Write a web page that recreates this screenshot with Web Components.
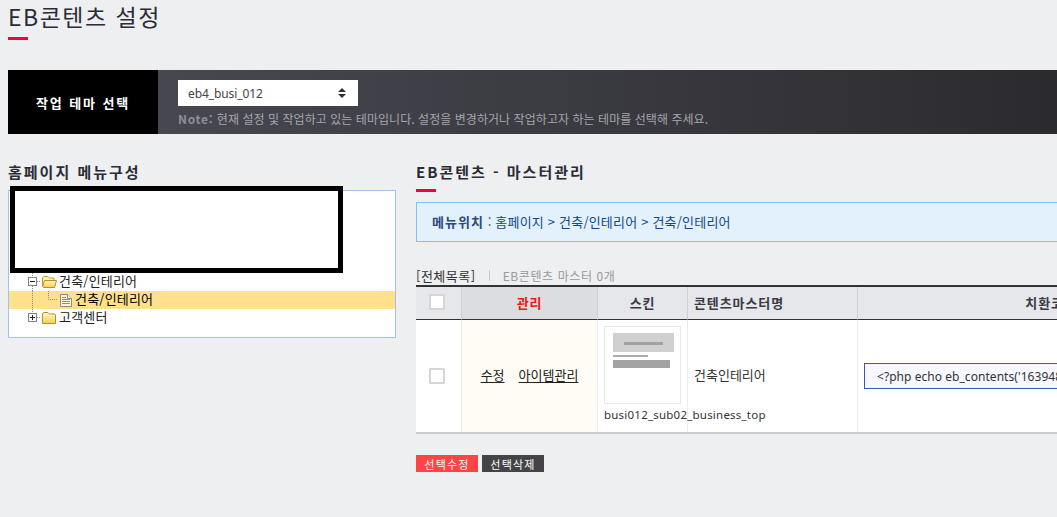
<!DOCTYPE html>
<html lang="ko">
<head>
<meta charset="utf-8">
<title>EB콘텐츠 설정</title>
<style>
    html, body { margin: 0; height: 100%; overflow: hidden; background: #eeeff1; }
    body { font-family: "Noto Sans CJK KR", "Noto Sans", sans-serif; font-size: 12px; color: #333; }
</style>
</head>
<body>
<eb-page>
    <eb-title slot="title">EB콘텐츠 설정</eb-title>
    <theme-bar slot="bar" label="작업 테마 선택" value="eb4_busi_012">
        <b>Note:</b> 현재 설정 및 작업하고 있는 테마입니다. 설정을 변경하거나 작업하고자 하는 테마를 선택해 주세요.
    </theme-bar>
    <menu-panel slot="left" heading="홈페이지 메뉴구성">
        <tree-row kind="open">건축/인테리어</tree-row>
        <tree-row kind="file" selected>건축/인테리어</tree-row>
        <tree-row kind="closed">고객센터</tree-row>
    </menu-panel>
    <master-panel slot="right" heading="EB콘텐츠 - 마스터관리"></master-panel>
</eb-page>

<script>
// page frame: title, theme bar, then two columns
class EbPage extends HTMLElement {
    constructor() {
        super();
        this.attachShadow({mode: 'open'}).innerHTML = `
            <style>
                :host { display: block; width: 1057px; height: 517px; overflow: hidden; }
                .bar { padding-left: 8px; }
                .title { padding-left: 8px; height: 70px; }
                .cols {
                    display: grid;
                    grid-template-columns: 388px 828px;
                    column-gap: 20px;
                    padding: 28px 0 0 8px;
                }
            </style>
            <div class="title"><slot name="title"></slot></div>
            <div class="bar"><slot name="bar"></slot></div>
            <div class="cols">
                <slot name="left"></slot>
                <slot name="right"></slot>
            </div>
        `;
    }
}

class EbTitle extends HTMLElement {
    constructor() {
        super();
        this.attachShadow({mode: 'open'}).innerHTML = `
            <style>
                :host { display: block; }
                h1 {
                    margin: 0;
                    height: 37px;
                    font: 400 23px/33px "Noto Sans CJK KR", sans-serif;
                    letter-spacing: 1.5px;
                    color: #2b2b36;
                }
                i { display: block; width: 20px; height: 3px; background: #f2003c; }
            </style>
            <h1><slot></slot></h1>
            <i></i>
        `;
    }
}

class ThemeBar extends HTMLElement {
    constructor() {
        super();
        const shadow = this.attachShadow({mode: 'open'});
        shadow.innerHTML = `
            <style>
                :host {
                    display: flex;
                    height: 64px;
                    background: linear-gradient(90deg, #4c4c56 0%, #2b2b2f 100%);
                }
                .label {
                    width: 150px;
                    background: #000;
                    color: #fff;
                    font-size: 13px;
                    font-weight: 700;
                    letter-spacing: 1.9px;
                    display: flex;
                    align-items: center;
                    justify-content: center;
                }
                .body { padding: 10px 0 0 20px; }
                .select {
                    width: 180px;
                    height: 26px;
                    box-sizing: border-box;
                    background: #fff;
                    padding: 0 12px 0 10px;
                    display: flex;
                    align-items: center;
                    justify-content: space-between;
                    font: 12px "Noto Sans", sans-serif;
                    color: #444;
                    letter-spacing: -0.1px;
                }
                svg { display: block; }
                .note {
                    margin-top: 5px;
                    font-size: 12px;
                    line-height: 16px;
                    color: #a5a5ab;
                    letter-spacing: 0.05px;
                    white-space: nowrap;
                }
                ::slotted(b) { color: #8d8d97; font-weight: 700; letter-spacing: 0.7px; }
            </style>
            <div class="label"></div>
            <div class="body">
                <div class="select">
                    <span class="val"></span>
                    <svg width="8" height="10" viewBox="0 0 8 10"><path d="M4 0 8 4H0ZM0 6H8L4 10Z" fill="#333"/></svg>
                </div>
                <div class="note"><slot></slot></div>
            </div>
        `;
        shadow.querySelector('.label').textContent = this.getAttribute('label');
        shadow.querySelector('.val').textContent = this.getAttribute('value');
    }
}

class SectionTitle extends HTMLElement {
    constructor() {
        super();
        this.attachShadow({mode: 'open'}).innerHTML = `
            <style>
                :host { display: block; }
                h2 {
                    margin: 0;
                    font: 700 15px/20px "Noto Sans CJK KR", sans-serif;
                    letter-spacing: 2px;
                    color: #2b2b36;
                }
            </style>
            <h2><slot></slot></h2>
        `;
    }
}

// left column
class MenuPanel extends HTMLElement {
    constructor() {
        super();
        const shadow = this.attachShadow({mode: 'open'});
        shadow.innerHTML = `
            <style>
                :host { display: block; position: relative; }
                .box {
                    margin-top: 8px;
                    height: 148px;
                    box-sizing: border-box;
                    border: 1px solid #a3c2ea;
                    background: #fff;
                    padding-top: 82px;
                }
                /* blacked out part of the screenshot */
                .redact {
                    position: absolute;
                    left: 2px;
                    top: 24px;
                    width: 333px;
                    height: 87px;
                    box-sizing: border-box;
                    border: 5px solid #000;
                    background: #fff;
                }
            </style>
            <section-title></section-title>
            <div class="box"><slot></slot></div>
            <div class="redact"></div>
        `;
        shadow.querySelector('section-title').textContent = this.getAttribute('heading');
    }
}

const FOLDER_GRAD = `<defs><linearGradient id="fg" x1="0" y1="0" x2="0" y2="1">
    <stop offset="0" stop-color="#fff6c0"/><stop offset="1" stop-color="#f7cf55"/></linearGradient></defs>`;

const TREE_ICONS = {
    open: `<svg width="50" height="18" viewBox="0 0 50 18">${FOLDER_GRAD}
        <path d="M23.500 0V4M23.500 13V18M28 8.500H32" stroke="#888" stroke-dasharray="1 1" fill="none"/>
        <rect x="19.500" y="4.500" width="8" height="8" fill="#fff" stroke="#808080"/>
        <path d="M21 8.500H26" stroke="#222"/>
        <path d="M33.500 13.500V4.500L35 3.500H39L40.500 5H45V7" fill="#fff2b0" stroke="#c49a2a"/>
        <path d="M33.500 13.500 35.500 7.500H47.500L45.500 14.500H34.500Z" fill="url(#fg)" stroke="#b98f22"/>
    </svg>`,
    closed: `<svg width="50" height="18" viewBox="0 0 50 18">${FOLDER_GRAD}
        <path d="M23.500 0V4M28 8.500H32" stroke="#888" stroke-dasharray="1 1" fill="none"/>
        <rect x="19.500" y="4.500" width="8" height="8" fill="#fff" stroke="#808080"/>
        <path d="M21 8.500H26M23.500 6V11" stroke="#222"/>
        <path d="M33.500 4.500 35 3.500H39L40.500 5H45.500L46.500 6V14.500H33.500Z" fill="url(#fg)" stroke="#b98f22"/>
        <path d="M34.500 6.500H45.500" stroke="#fffbe0"/>
    </svg>`,
    file: `<svg width="66" height="18" viewBox="0 0 66 18">
        <path d="M23.500 0V18" stroke="#888" stroke-dasharray="1 1" fill="none"/>
        <path d="M39.500 0V8.500H49" stroke="#888" stroke-dasharray="1 1" fill="none"/>
        <path d="M51.500 3.500H58.500L62.500 7.500V15.500H51.500Z" fill="#fff8d4" stroke="#8a8a8a"/>
        <path d="M58.500 3.500V7.500H62.500" fill="#fff" stroke="#8a8a8a"/>
        <path d="M53 6.500H57M53 8.500H61M53 10.500H61M53 12.500H61" stroke="#8f8f68"/>
    </svg>`
};

class TreeRow extends HTMLElement {
    constructor() {
        super();
        const kind = this.getAttribute('kind');
        this.attachShadow({mode: 'open'}).innerHTML = `
            <style>
                :host {
                    display: flex;
                    align-items: center;
                    height: 18px;
                    font-size: 13px;
                    letter-spacing: 0.2px;
                    color: #222;
                    white-space: nowrap;
                }
                :host([selected]) { background: #ffe08c; color: #000; }
                svg { display: block; flex: none; }
                span { line-height: 16px; padding-bottom: 3px; }
            </style>
            ${TREE_ICONS[kind]}
            <span><slot></slot></span>
        `;
    }
}

// right column
class MasterPanel extends HTMLElement {
    constructor() {
        super();
        const shadow = this.attachShadow({mode: 'open'});
        shadow.innerHTML = `
            <style>
                :host { display: block; }
                .rule { width: 20px; height: 3px; background: #f2003c; margin-top: 7px; }
                .where {
                    margin-top: 10px;
                    height: 40px;
                    box-sizing: border-box;
                    border: 1px solid #7cc2f7;
                    background: #e3f1fc;
                    padding: 0 0 2px 15px;
                    display: flex;
                    align-items: center;
                    color: #0d4a8c;
                    font-size: 13px;
                    letter-spacing: 0.2px;
                    white-space: pre;
                }
                .where b { letter-spacing: 1px; color: #2a4a80; }
                .count {
                    margin-top: 24px;
                    height: 19px;
                    display: flex;
                    align-items: center;
                    font-size: 13px;
                    letter-spacing: 0.5px;
                    color: #333;
                }
                .count i { width: 1px; height: 11px; background: #ccc; margin: 0 13px; }
                .count span { color: #999; font-size: 12px; letter-spacing: 0.6px; }
                .actions { display: flex; gap: 4px; margin-top: 21px; }
            </style>
            <section-title></section-title>
            <div class="rule"></div>
            <div class="where"><b>메뉴위치</b> : 홈페이지 &gt; 건축/인테리어 &gt; 건축/인테리어</div>
            <div class="count">[전체목록]<i></i><span>EB콘텐츠 마스터 0개</span></div>
            <master-table></master-table>
            <div class="actions">
                <eb-button tone="red">선택수정</eb-button>
                <eb-button tone="dark">선택삭제</eb-button>
            </div>
        `;
        shadow.querySelector('section-title').textContent = this.getAttribute('heading');
    }
}

class EbCheck extends HTMLElement {
    constructor() {
        super();
        this.attachShadow({mode: 'open'}).innerHTML = `
            <style>
                :host {
                    display: block;
                    width: 16px;
                    height: 16px;
                    margin-left: 13px;
                    box-sizing: border-box;
                    border: 2px solid #d6d6d6;
                    border-radius: 1px;
                    background: #fff;
                }
            </style>
        `;
    }
}

class MasterTable extends HTMLElement {
    constructor() {
        super();
        this.attachShadow({mode: 'open'}).innerHTML = `
            <style>
                :host { display: block; }
                table {
                    table-layout: fixed;
                    width: 828px;
                    border-collapse: separate;
                    border-spacing: 0;
                    border-top: 2px solid #333;
                    border-bottom: 2px solid #ccc;
                    background: #fff;
                    font-size: 13px;
                    color: #333;
                }
                th {
                    box-sizing: border-box;
                    height: 33px;
                    padding: 0 0 2px;
                    background: #e6e7ea;
                    border-bottom: 1px solid #333;
                    border-right: 1px solid #cfd0d4;
                    font-weight: 700;
                    letter-spacing: 0.9px;
                    color: #3a3a44;
                }
                th.manage { background: #dcdde1; color: #e81a10; }
                th.name { text-align: left; padding-left: 6px; }
                td {
                    box-sizing: border-box;
                    height: 112px;
                    padding: 0;
                    border-right: 1px solid #eceded;
                    white-space: nowrap;
                }
                th:last-child, td:last-child { border-right: 0; }
                td.manage { background: #fffcf5; text-align: center; padding-bottom: 3px; }
                td.manage a { color: #222; text-decoration: underline; text-underline-offset: 2px; }
                td.manage a + a { margin-left: 14px; }
                td.skin { padding: 6px 0 0 6px; vertical-align: top; }
                td.name { padding: 0 0 3px 6px; }
                td.code { padding-left: 6px; }
                .thumb { display: block; }
                .skin-name {
                    margin-top: 2px;
                    line-height: 18px;
                    letter-spacing: 0.22px;
                    font-family: "Noto Sans", sans-serif;
                    font-size: 11.5px;
                }
                .code-box {
                    box-sizing: border-box;
                    height: 26px;
                    width: 374px;
                    border: 1px solid #3d52bd;
                    background: #f6f7ff;
                    padding-left: 12px;
                    display: flex;
                    align-items: center;
                    font: 12px "Noto Sans", sans-serif;
                    letter-spacing: 0.05px;
                    overflow: hidden;
                }
            </style>
            <table>
                <colgroup>
                    <col style="width:46px"><col style="width:136px"><col style="width:90px"><col style="width:170px"><col>
                </colgroup>
                <tr>
                    <th><eb-check></eb-check></th>
                    <th class="manage">관리</th>
                    <th>스킨</th>
                    <th class="name">콘텐츠마스터명</th>
                    <th>치환코드</th>
                </tr>
                <tr>
                    <td><eb-check></eb-check></td>
                    <td class="manage"><a>수정</a><a>아이템관리</a></td>
                    <td class="skin">
                        <svg class="thumb" width="77" height="78" viewBox="0 0 77 78">
                            <filter id="soft"><feGaussianBlur stdDeviation="0.35"/></filter>
                            <rect x=".5" y=".5" width="76" height="77" fill="#fff" stroke="#e8e8e8"/>
                            <g filter="url(#soft)">
                                <rect x="9" y="7" width="61" height="19" fill="#d0d0d0"/>
                                <rect x="20" y="16" width="39" height="3" fill="#a2a2a2"/>
                                <rect x="9" y="29" width="35" height="2" fill="#adadad"/>
                                <rect x="9" y="34" width="57" height="8" fill="#a3a3a3"/>
                            </g>
                        </svg>
                        <div class="skin-name">busi012_sub02_business_top</div>
                    </td>
                    <td class="name">건축인테리어</td>
                    <td class="code"><div class="code-box">&lt;?php echo eb_contents('1639486521');?&gt;</div></td>
                </tr>
            </table>
        `;
    }
}

class EbButton extends HTMLElement {
    constructor() {
        super();
        this.attachShadow({mode: 'open'}).innerHTML = `
            <style>
                :host {
                    display: flex;
                    align-items: center;
                    justify-content: center;
                    width: 62px;
                    height: 17px;
                    font-size: 11px;
                    letter-spacing: 1.2px;
                    color: #fff;
                    background: #444448;
                }
                :host([tone="red"]) { background: #ff4444; }
            </style>
            <slot></slot>
        `;
    }
}

customElements.define('section-title', SectionTitle);
customElements.define('eb-check', EbCheck);
customElements.define('eb-button', EbButton);
customElements.define('master-table', MasterTable);
customElements.define('eb-title', EbTitle);
customElements.define('theme-bar', ThemeBar);
customElements.define('tree-row', TreeRow);
customElements.define('menu-panel', MenuPanel);
customElements.define('master-panel', MasterPanel);
customElements.define('eb-page', EbPage);
</script>
</body>
</html>
